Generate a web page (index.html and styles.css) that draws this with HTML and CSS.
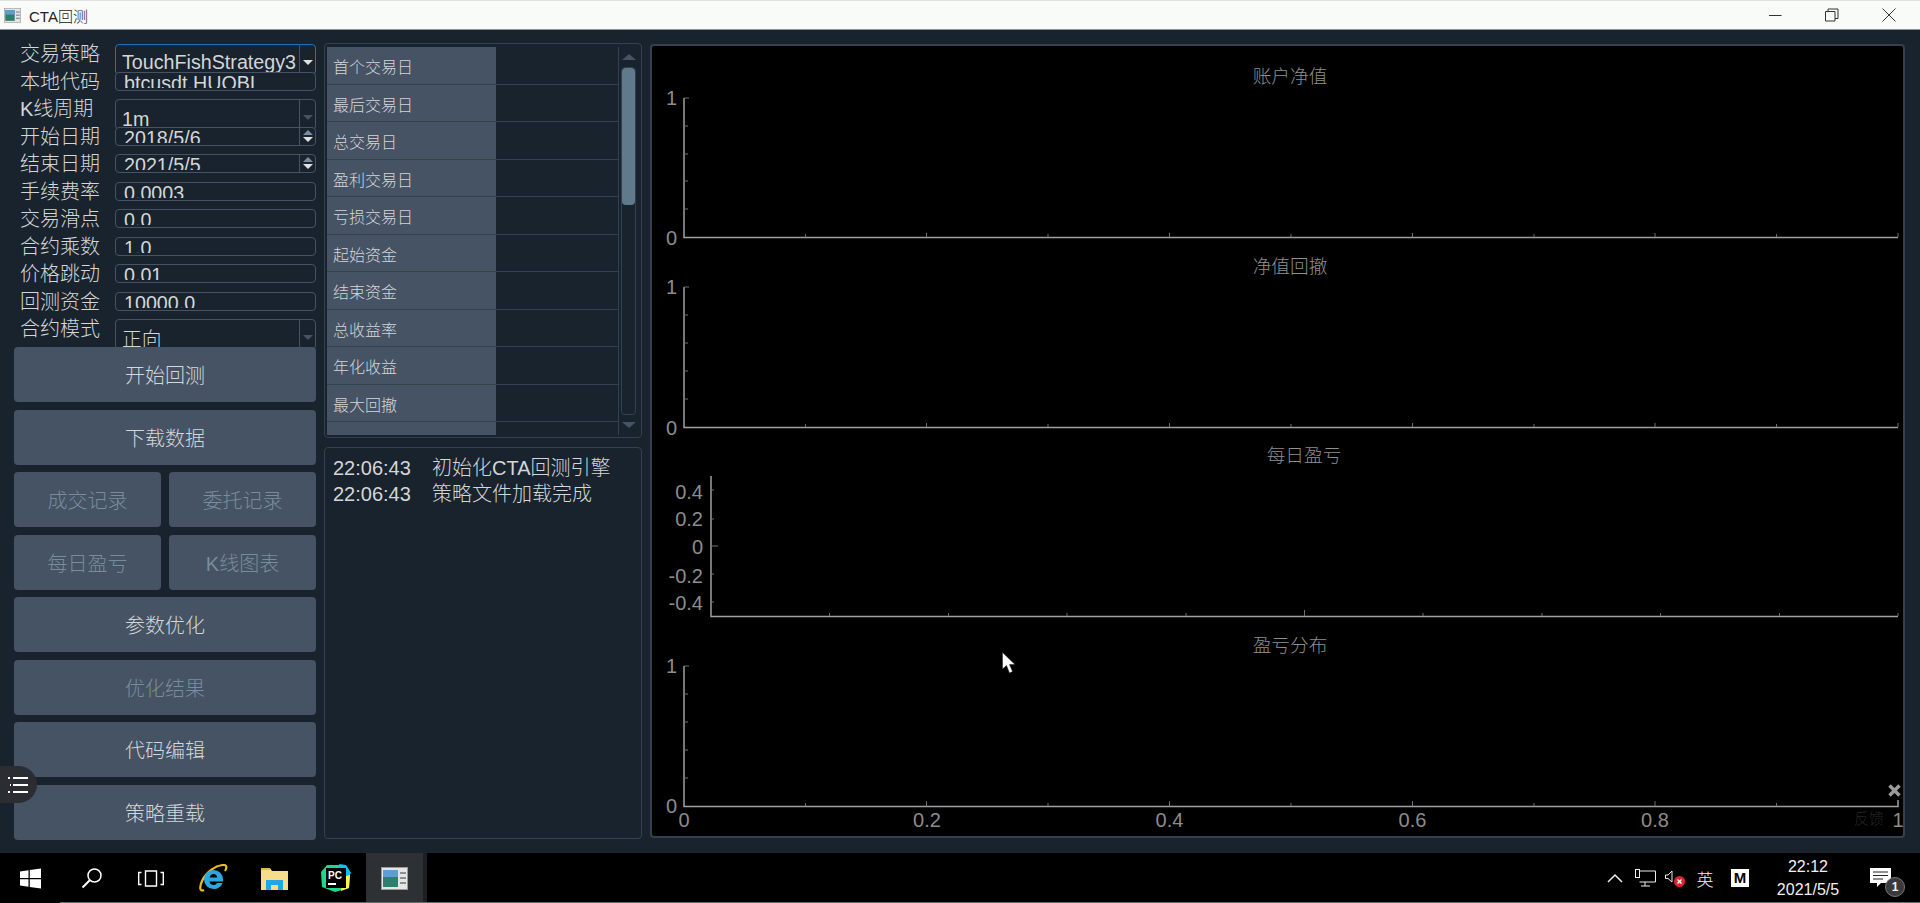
FILE: index.html
```html
<!DOCTYPE html>
<html lang="zh-CN">
<head>
  <meta charset="UTF-8" />
  <title>CTA回测</title>
  <link rel="stylesheet" href="styles.css">
</head>
<body>
  <div class="titlebar">
    <svg class="app-icon small" viewBox="0 0 27 23">
      <rect x="0.5" y="0.5" width="26" height="22" fill="#e4e6e6" stroke="#9a9c9c"/>
      <rect x="2" y="3" width="15" height="17" fill="#2f7f70"/>
      <rect x="2" y="3" width="15" height="7" fill="#5f9fd0"/>
      <rect x="19" y="5" width="6" height="2" fill="#8a8f90"/>
      <rect x="19" y="10" width="6" height="2" fill="#8a8f90"/>
      <rect x="19" y="15" width="6" height="2" fill="#8a8f90"/>
    </svg>
    <span class="window-title">CTA回测</span>
    <div class="window-controls">
      <div class="window-btn">
        <svg width="14" height="14" viewBox="0 0 14 14"><path d="M1 7.5h12.500" stroke="#333" fill="none"/></svg>
      </div>
      <div class="window-btn">
        <svg width="14" height="14" viewBox="0 0 14 14"><path d="M0.500 3.500h9.500v9.500h-9.500zM3 3.500v-2.500h10v9.500h-3" stroke="#333" fill="none"/></svg>
      </div>
      <div class="window-btn">
        <svg width="14" height="14" viewBox="0 0 14 14"><path d="M0.500 0.500l13 13M13.500 0.500l-13 13" stroke="#333" fill="none"/></svg>
      </div>
    </div>
  </div>

  <div class="main">
    <div class="left-col">
      <div class="form">
        <div class="form-row">
          <label>交易策略</label>
          <div class="field combo focused">
            <span class="field-text">TouchFishStrategy3</span>
            <span class="arrow-box"><i class="arrow-down bright"></i></span>
          </div>
        </div>
        <div class="form-row">
          <label>本地代码</label>
          <div class="field"><span class="field-text">btcusdt.HUOBI</span></div>
        </div>
        <div class="form-row">
          <label>K线周期</label>
          <div class="field combo">
            <span class="field-text">1m</span>
            <span class="arrow-box"><i class="arrow-down"></i></span>
          </div>
        </div>
        <div class="form-row">
          <label>开始日期</label>
          <div class="field">
            <span class="field-text">2018/5/6</span>
            <span class="spin-box"><i class="arrow-up"></i><i class="arrow-down bright"></i></span>
          </div>
        </div>
        <div class="form-row">
          <label>结束日期</label>
          <div class="field">
            <span class="field-text">2021/5/5</span>
            <span class="spin-box"><i class="arrow-up"></i><i class="arrow-down bright"></i></span>
          </div>
        </div>
        <div class="form-row">
          <label>手续费率</label>
          <div class="field"><span class="field-text">0.0003</span></div>
        </div>
        <div class="form-row">
          <label>交易滑点</label>
          <div class="field"><span class="field-text">0.0</span></div>
        </div>
        <div class="form-row">
          <label>合约乘数</label>
          <div class="field"><span class="field-text">1.0</span></div>
        </div>
        <div class="form-row">
          <label>价格跳动</label>
          <div class="field"><span class="field-text">0.01</span></div>
        </div>
        <div class="form-row">
          <label>回测资金</label>
          <div class="field"><span class="field-text">10000.0</span></div>
        </div>
        <div class="form-row">
          <label>合约模式</label>
          <div class="field combo">
            <span class="field-text">正向</span>
            <span class="arrow-box"><i class="arrow-down"></i></span>
          </div>
        </div>
      </div>

      <div class="button-list">
        <button>开始回测</button>
        <button>下载数据</button>
        <div class="button-pair">
          <button disabled>成交记录</button>
          <button disabled>委托记录</button>
        </div>
        <div class="button-pair">
          <button disabled>每日盈亏</button>
          <button disabled>K线图表</button>
        </div>
        <button>参数优化</button>
        <button disabled>优化结果</button>
        <button>代码编辑</button>
        <button>策略重载</button>
      </div>
    </div>

    <div class="mid-col">
      <div class="panel stats">
        <div class="stats-table">
          <div class="stat-row"><div class="stat-name">首个交易日</div></div>
          <div class="stat-row"><div class="stat-name">最后交易日</div></div>
          <div class="stat-row"><div class="stat-name">总交易日</div></div>
          <div class="stat-row"><div class="stat-name">盈利交易日</div></div>
          <div class="stat-row"><div class="stat-name">亏损交易日</div></div>
          <div class="stat-row"><div class="stat-name">起始资金</div></div>
          <div class="stat-row"><div class="stat-name">结束资金</div></div>
          <div class="stat-row"><div class="stat-name">总收益率</div></div>
          <div class="stat-row"><div class="stat-name">年化收益</div></div>
          <div class="stat-row"><div class="stat-name">最大回撤</div></div>
          <div class="stat-row"><div class="stat-name"></div></div>
        </div>
        <div class="scrollbar">
          <div class="scroll-end"><i class="scroll-up"></i></div>
          <div class="scroll-track"><div class="scroll-handle"></div></div>
          <div class="scroll-end"><i class="scroll-down"></i></div>
        </div>
      </div>
      <div class="panel log">
        <div class="log-line"><span class="log-time">22:06:43</span><span>初始化CTA回测引擎</span></div>
        <div class="log-line"><span class="log-time">22:06:43</span><span>策略文件加载完成</span></div>
      </div>
    </div>

    <div class="chart-panel">
      <svg class="plot" height="195" viewBox="0 0 1250 195">
        <text class="plot-title" x="637" y="37">账户净值</text>
        <path class="axis" d="M31 52V191.500H1245"/>
        <path class="tick" d="M31 52h5M31 80h4M31 108h4M31 135h4M31 163h4M152.500 191v-3M273.500 191v-4M395 191v-3M516.500 191v-4M638 191v-3M759.500 191v-4M881 191v-3M1002 191v-4M1123.500 191v-3M1245 191v-4"/>
        <text class="y-label" x="24" y="59">1</text>
        <text class="y-label" x="24" y="199">0</text>
      </svg>
      <svg class="plot" height="190" viewBox="0 0 1250 190">
        <text class="plot-title" x="637" y="32">净值回撤</text>
        <path class="axis" d="M31 46V186.500H1245"/>
        <path class="tick" d="M31 46h5M31 74h4M31 102h4M31 130h4M31 158h4M152.500 186v-3M273.500 186v-4M395 186v-3M516.500 186v-4M638 186v-3M759.500 186v-4M881 186v-3M1002 186v-4M1123.500 186v-3M1245 186v-4"/>
        <text class="y-label" x="24" y="53">1</text>
        <text class="y-label" x="24" y="194">0</text>
      </svg>
      <svg class="plot" height="189" viewBox="0 0 1250 189">
        <text class="plot-title" x="651" y="31">每日盈亏</text>
        <path class="axis" d="M58 45V185.500H1245"/>
        <path class="tick" d="M58 59h3M58 88h3M58 115h7M58 143h3M58 171h3M176.500 185v-3M295.500 185v-3M414 185v-3M533 185v-3M651.500 185v-6M770 185v-3M889 185v-3M1007.500 185v-3M1126.500 185v-3M1245 185v-3"/>
        <text class="y-label" x="50" y="68">0.4</text>
        <text class="y-label" x="50" y="95">0.2</text>
        <text class="y-label" x="50" y="123">0</text>
        <text class="y-label" x="50" y="152">-0.2</text>
        <text class="y-label" x="50" y="179">-0.4</text>
      </svg>
      <svg class="plot" height="216" viewBox="0 0 1250 216">
        <text class="plot-title" x="637" y="32">盈亏分布</text>
        <path class="axis" d="M31 46V186.500H1245V180"/>
        <path class="tick" d="M31 46h5M31 74h4M31 102h4M31 130h4M31 158h4M152.500 186v-3M273.500 186v-5M395 186v-3M516.500 186v-5M638 186v-3M759.500 186v-5M881 186v-3M1002 186v-5M1123.500 186v-3"/>
        <text class="y-label" x="24" y="53">1</text>
        <text class="y-label" x="24" y="193">0</text>
        <text class="x-label" x="31" y="207">0</text>
        <text class="x-label" x="274" y="207">0.2</text>
        <text class="x-label" x="516.500" y="207">0.4</text>
        <text class="x-label" x="759.500" y="207">0.6</text>
        <text class="x-label" x="1002" y="207">0.8</text>
        <text class="x-label" x="1245" y="207">1</text>
      </svg>
      <span class="feedback">反馈</span>
      <svg class="feedback-close" width="15" height="15" viewBox="0 0 15 15"><path d="M2.500 2.500l10 10M12.500 2.500l-10 10" stroke="#9a9a9a" stroke-width="3.500" fill="none"/></svg>
    </div>
  </div>

  <div class="taskbar">
    <div class="task-item">
      <svg width="21" height="21" viewBox="0 0 21 21"><path d="M0 3.500l8.500-1.200v7.700H0zM9.800 2.100L21 0.500V10H9.800zM0 11.200h8.500v7.600L0 17.500zM9.800 11.200H21v9.300L9.800 19z" fill="#fff"/></svg>
    </div>
    <div class="task-item">
      <svg width="22" height="22" viewBox="0 0 22 22"><circle cx="13.500" cy="8.500" r="6.500" stroke="#fff" stroke-width="1.500" fill="none"/><path d="M8.800 13.200L1.500 20.500" stroke="#fff" stroke-width="2" fill="none"/></svg>
    </div>
    <div class="task-item">
      <svg class="task-view" width="26" height="17" viewBox="0 0 26 17"><path d="M7.500 1h11v15h-11zM3.500 2.500H0.700v12h2.800M22.500 2.500h2.800v12h-2.800" stroke="#fff" stroke-width="1.400" fill="none"/></svg>
    </div>
    <div class="task-item">
      <svg width="30" height="29" viewBox="0 0 30 29">
        <path d="M5 26C1 28 0 24 3 17 7 8 17 1 25 1c3 0 3 3 1 6" stroke="#e8c020" stroke-width="2.200" fill="none"/>
        <path d="M14.500 6a9.500 9.500 0 0 0 0 19c4 0 7.500-2 9-6h-5.500c-.8 1.500-2 2-3.500 2-2.200 0-3.800-1.400-4-3.500h13.500c.1-.7.1-1.200.1-2A9.600 9.600 0 0 0 14.500 6zM10.700 13.500c.3-2 1.800-3.500 3.800-3.500s3.500 1.500 3.800 3.500z" fill="#2aa9e0"/>
      </svg>
    </div>
    <div class="task-item">
      <svg width="27" height="24" viewBox="0 0 27 24">
        <path d="M0 2h9l2 3h16v19H0z" fill="#f7dc8a"/>
        <path d="M0 2h9v2H0z" fill="#e2b84c"/>
        <path d="M5 24v-10h17v10h-5v-5h-7v5z" fill="#1fa7e6"/>
      </svg>
    </div>
    <div class="task-item">
      <svg width="30" height="30" viewBox="0 0 30 30">
        <path d="M6 2l17 0 6 8-1 15-14 4L1 24 0 9z" fill="#21d789"/>
        <path d="M18 1l7 1 5 8-6 8z" fill="#07c3f2"/>
        <path d="M22 14l7-2-1 13-8 3z" fill="#fcf84a"/>
        <rect x="5" y="5" width="20" height="20" fill="#000"/>
        <rect x="7" y="20" width="8" height="2" fill="#fff"/>
        <text class="pc-mark" x="7" y="16">PC</text>
      </svg>
    </div>
    <div class="task-item active">
      <svg class="app-icon" viewBox="0 0 27 23">
        <rect x="0.500" y="0.500" width="26" height="22" fill="#e4e6e6" stroke="#9a9c9c"/>
        <rect x="2" y="3" width="15" height="17" fill="#2f7f70"/>
        <rect x="2" y="3" width="15" height="7" fill="#5f9fd0"/>
        <rect x="19" y="5" width="6" height="2" fill="#8a8f90"/>
        <rect x="19" y="10" width="6" height="2" fill="#8a8f90"/>
        <rect x="19" y="15" width="6" height="2" fill="#8a8f90"/>
      </svg>
    </div>

    <div class="tray">
      <div class="tray-item">
        <svg width="16" height="10" viewBox="0 0 16 10"><path d="M1 9l7-7 7 7" stroke="#eee" stroke-width="1.500" fill="none"/></svg>
      </div>
      <div class="tray-item">
        <svg width="21" height="18" viewBox="0 0 21 18"><path d="M4.500 2H20.500V13H4.500M10 13v4M6 17h9" stroke="#eee" fill="none"/><rect x="0.500" y="0.500" width="4" height="8" stroke="#eee" fill="#000"/></svg>
      </div>
      <div class="tray-item">
        <svg width="20" height="18" viewBox="0 0 20 18"><path d="M0.500 6H3L7 2v11L3 9.500H0.500z" stroke="#eee" fill="none"/><circle cx="14.500" cy="12.500" r="5.500" fill="#e0222c"/><path d="M12.500 10.500l4 4M16.500 10.500l-4 4" stroke="#fff" stroke-width="1.300" fill="none"/></svg>
      </div>
      <div class="tray-item ime">英</div>
      <div class="tray-item"><span class="m-box">M</span></div>
      <div class="clock">
        <span>22:12</span>
        <span>2021/5/5</span>
      </div>
      <div class="notify">
        <svg width="22" height="20" viewBox="0 0 22 20"><path d="M0 0h21v15H11l-4 4v-4H0z" fill="#fff"/><path d="M3 4h15M3 7.500h15M3 11h10" stroke="#222" fill="none"/></svg>
        <span class="notify-badge">1</span>
      </div>
    </div>
  </div>

  <div class="float-menu">
    <svg width="20" height="18" viewBox="0 0 20 18"><path d="M5 2h15M5 9h15M5 16h15M0 2h2M2 9h1M0 16h2" stroke="#fff" stroke-width="2" fill="none"/></svg>
  </div>
  <svg class="cursor" width="14" height="22" viewBox="0 0 14 22"><path d="M0.500 0.500V17L4.500 13.500 7.500 21 10.500 19.500 7.500 12.500H13z" fill="#fff" stroke="#222" stroke-width="0.500"/></svg>
</body>
</html>
```

FILE: styles.css
```css
html, body {
  margin: 0;
  padding: 0;
  height: 100%;
  overflow: hidden;
  background: #19232d;
  color: #d4d6d8;
  font-family: "Liberation Sans", "Noto Sans CJK SC", sans-serif;
  font-weight: 300;
}

body {
  display: flex;
  flex-direction: column;
  position: relative;
}

/* title bar */
.titlebar {
  height: 30px;
  box-sizing: border-box;
  flex: none;
  display: flex;
  align-items: center;
  padding-left: 4px;
  background: #f9fbf8;
  border-top: 1px solid #dfe2e0;
  border-bottom: 1px solid #8f9294;
  color: #222;
  font-size: 15px;
}

.app-icon {
  width: 27px;
  height: 23px;
}

.app-icon.small {
  width: 17px;
  height: 15px;
}

.window-title {
  margin-left: 8px;
}

.window-controls {
  margin-left: auto;
  display: flex;
  padding-right: 3px;
}

.window-btn {
  width: 57px;
  display: flex;
  justify-content: center;
}

/* main area */
.main {
  flex: 1;
  min-height: 0;
  display: flex;
  gap: 8px;
  padding: 13px 15px 14px 14px;
}

.left-col {
  width: 302px;
  flex: none;
  padding-top: 1px;
  display: flex;
  flex-direction: column;
}

.form {
  height: 303px;
  flex: none;
}

.form-row {
  height: 27.5px;
  display: flex;
}

.form-row label {
  width: 101px;
  flex: none;
  box-sizing: border-box;
  padding-left: 6px;
  font-size: 20px;
  line-height: 20px;
}

.field {
  width: 201px;
  height: 19px;
  flex: none;
  box-sizing: border-box;
  display: flex;
  overflow: hidden;
  background: #19232d;
  border: 1px solid #455364;
  border-radius: 4px;
  font-size: 19.7px;
}

/* the form is squeezed, so the text is cut by its content box */
.field-text {
  flex: 1;
  height: 15px;
  overflow: hidden;
  padding-left: 8px;
  line-height: 21px;
  white-space: nowrap;
}

.combo {
  height: 31px;
}

.combo .field-text {
  height: auto;
  padding-left: 6px;
  line-height: 38px;
}

.combo.focused .field-text {
  line-height: 35px;
}

.focused {
  border-color: #1a72bb;
}

.arrow-box, .spin-box {
  width: 15px;
  flex: none;
  display: flex;
  flex-direction: column;
  align-items: center;
  border-left: 1px solid #455364;
}

.arrow-box {
  padding-top: 15px;
  height: 16px;
}

.spin-box {
  gap: 2px;
  padding-top: 2px;
}

.arrow-down, .arrow-up {
  display: block;
  width: 0;
  height: 0;
  border-left: 5px solid transparent;
  border-right: 5px solid transparent;
}

.arrow-down {
  border-top: 5px solid #455364;
}

.arrow-up {
  border-bottom: 5px solid #788d9c;
}

.arrow-down.bright {
  border-top-color: #e0e1e3;
}

/* buttons sit over the last combo box */
.button-list {
  position: relative;
  display: flex;
  flex-direction: column;
  gap: 7.5px;
}

button {
  height: 55px;
  width: 100%;
  padding: 0;
  border: none;
  border-radius: 4px;
  background: #455364;
  color: #d4d6d8;
  font-family: inherit;
  font-weight: inherit;
  font-size: 20px;
}

button:disabled {
  color: #788d9c;
}

.button-pair {
  display: flex;
  gap: 8px;
}

/* middle column */
.mid-col {
  width: 318px;
  flex: none;
  display: flex;
  flex-direction: column;
  gap: 9px;
}

.panel {
  box-sizing: border-box;
  border: 1px solid #32414b;
  border-radius: 4px;
}

.stats {
  height: 395px;
  flex: none;
  display: flex;
  padding: 3px 5px 2px 2px;
  gap: 2px;
}

.stats-table {
  width: 292px;
  flex: none;
  overflow: hidden;
  border-right: 1px solid #32414b;
  box-sizing: border-box;
}

.stat-row {
  height: 37.5px;
  box-sizing: border-box;
  border-bottom: 1.5px solid #32414b;
}

.stat-name {
  width: 169px;
  height: 100%;
  box-sizing: border-box;
  padding: 4px 0 0 6px;
  background: #455364;
  font-size: 16px;
  line-height: 33px;
}

.scrollbar {
  flex: 1;
  display: flex;
  flex-direction: column;
}

.scroll-end {
  height: 20px;
  flex: none;
  display: flex;
  align-items: center;
  justify-content: center;
}

.scroll-up, .scroll-down {
  width: 0;
  height: 0;
  border-left: 7px solid transparent;
  border-right: 7px solid transparent;
}

.scroll-up {
  border-bottom: 6px solid #455364;
}

.scroll-down {
  border-top: 6px solid #455364;
}

.scroll-track {
  flex: 1;
  border: 1px solid #32414b;
  border-radius: 4px;
}

.scroll-handle {
  height: 137px;
  background: #60798b;
  border-radius: 4px;
}

.log {
  flex: 1;
  padding: 7px 8px;
  font-size: 20px;
  line-height: 26px;
}

.log-line {
  display: flex;
  white-space: nowrap;
}

.log-time {
  width: 99px;
  flex: none;
}

/* charts */
.chart-panel {
  flex: 1;
  margin-top: 1px;
  margin-bottom: 1px;
  padding-left: 1px;
  position: relative;
  box-sizing: border-box;
  display: flex;
  flex-direction: column;
  background: #000;
  border: 2px solid #32414b;
  border-radius: 4px;
}

.plot {
  width: 1250px;
  flex: none;
  display: block;
  overflow: visible;
}

.plot text {
  fill: #8c8c8c;
  font-size: 20px;
}

.plot .plot-title {
  font-size: 18.700px;
  fill: #8f8f8f;
  text-anchor: middle;
}

.plot .y-label {
  text-anchor: end;
}

.plot .x-label {
  text-anchor: middle;
}

.axis {
  fill: none;
  stroke: #a0a0a0;
  stroke-width: 1.500;
}

.tick {
  fill: none;
  stroke: #6e6e6e;
}

.feedback {
  position: absolute;
  left: 1202px;
  top: 761px;
  font-size: 15px;
  color: #262626;
}

.feedback-close {
  position: absolute;
  right: 1px;
  top: 737px;
}

/* taskbar */
.taskbar {
  height: 50px;
  flex: none;
  box-sizing: border-box;
  display: flex;
  background: #000;
  color: #f0f0f0;
  position: relative;
}

.taskbar::after {
  content: "";
  position: absolute;
  left: 60px;
  right: 0;
  bottom: 0;
  height: 1px;
  background: #6a6d70;
}

.task-item {
  width: 61px;
  display: flex;
  align-items: center;
  justify-content: center;
}

.task-item.active {
  box-sizing: border-box;
  background: #2e3134;
  border-right: 4px solid #1d1f21;
}

.task-view {
  margin-right: 4px;
}

.pc-mark {
  fill: #fff;
  font-size: 10px;
  font-weight: 700;
}

.tray {
  margin-left: auto;
  display: flex;
  align-items: center;
  padding-right: 10px;
}

.tray-item {
  width: 30px;
  display: flex;
  justify-content: center;
}

.ime {
  font-size: 17px;
  margin-right: 5px;
}

.m-box {
  width: 18px;
  height: 18px;
  background: #fff;
  color: #000;
  font-size: 15px;
  font-weight: 700;
  line-height: 18px;
  text-align: center;
}

.clock {
  width: 76px;
  margin: 0 6px 0 15px;
  display: flex;
  flex-direction: column;
  align-items: center;
  gap: 3px;
  font-size: 16px;
  line-height: 20px;
}

.notify {
  width: 58px;
  position: relative;
  display: flex;
  justify-content: center;
}

.notify-badge {
  position: absolute;
  left: 33px;
  top: 9px;
  width: 20px;
  height: 20px;
  border-radius: 50%;
  background: #3a3a3a;
  border: 1px solid #777;
  box-sizing: border-box;
  font-size: 12px;
  font-weight: 700;
  line-height: 18px;
  text-align: center;
}

/* overlays */
.float-menu {
  position: absolute;
  left: 0;
  top: 766px;
  width: 37px;
  height: 37px;
  box-sizing: border-box;
  padding: 10px 0 0 8px;
  background: #2a2d31;
  border-radius: 0 19px 19px 0;
}

.cursor {
  position: absolute;
  left: 1002px;
  top: 652px;
}
```
